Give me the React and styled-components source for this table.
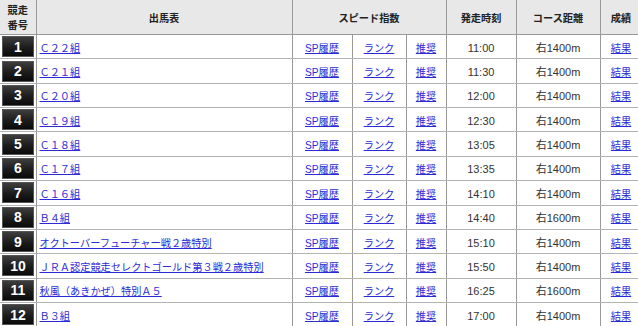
import styled, { createGlobalStyle } from "styled-components";

const races = [
  { no: 1, name: "Ｃ２２組", time: "11:00", dist: "右1400m" },
  { no: 2, name: "Ｃ２１組", time: "11:30", dist: "右1400m" },
  { no: 3, name: "Ｃ２０組", time: "12:00", dist: "右1400m" },
  { no: 4, name: "Ｃ１９組", time: "12:30", dist: "右1400m" },
  { no: 5, name: "Ｃ１８組", time: "13:05", dist: "右1400m" },
  { no: 6, name: "Ｃ１７組", time: "13:35", dist: "右1400m" },
  { no: 7, name: "Ｃ１６組", time: "14:10", dist: "右1400m" },
  { no: 8, name: "Ｂ４組", time: "14:40", dist: "右1600m" },
  { no: 9, name: "オクトーバーフューチャー戦２歳特別", time: "15:10", dist: "右1400m" },
  { no: 10, name: "ＪＲＡ認定競走セレクトゴールド第３戦２歳特別", time: "15:50", dist: "右1400m" },
  { no: 11, name: "秋風（あきかぜ）特別Ａ５", time: "16:25", dist: "右1600m" },
  { no: 12, name: "Ｂ３組", time: "17:00", dist: "右1400m" },
];

const GlobalStyle = createGlobalStyle`
  html, body {
    margin: 0;
    padding: 0;
    background: #fff;
    overflow: hidden;
  }
  body {
    font-family: "Liberation Sans", "Noto Sans CJK JP", sans-serif;
  }
`;

export default function App() {
  return (
    <>
      <GlobalStyle />
      <Table>
        <colgroup>
          <col style={{ width: 36 }} />
          <col style={{ width: 256 }} />
          <col style={{ width: 60 }} />
          <col style={{ width: 54 }} />
          <col style={{ width: 40 }} />
          <col style={{ width: 70 }} />
          <col style={{ width: 84 }} />
          <col style={{ width: 42 }} />
        </colgroup>
        <thead>
          <HeadRow>
            <Th>
              競走
              <br />
              番号
            </Th>
            <Th>出馬表</Th>
            <Th colSpan={3}>スピード指数</Th>
            <Th>発走時刻</Th>
            <Th>コース距離</Th>
            <Th>成績</Th>
          </HeadRow>
        </thead>
        <tbody>
          {races.map((r) => (
            <Row key={r.no}>
              <NumCell>
                <Badge>{r.no}</Badge>
              </NumCell>
              <Td align="left">
                <Link href="#">{r.name}</Link>
              </Td>
              <Td>
                <Link href="#">SP履歴</Link>
              </Td>
              <Td>
                <Link href="#">ランク</Link>
              </Td>
              <Td>
                <Link href="#">推奨</Link>
              </Td>
              <Td>
                <Plain>{r.time}</Plain>
              </Td>
              <Td>
                <Plain>{r.dist}</Plain>
              </Td>
              <Td>
                <Link href="#">結果</Link>
              </Td>
            </Row>
          ))}
        </tbody>
      </Table>
    </>
  );
}

const Table = styled.table`
  border-collapse: collapse;
  table-layout: fixed;
  width: 642px;
  border: none;
`;

const HeadRow = styled.tr`
  height: 34.5px;
`;

const Row = styled.tr`
  height: 24.37px;
`;

const Th = styled.th`
  background: #e8e8e8;
  color: #222;
  font-family: "Noto Sans CJK JP", sans-serif;
  font-weight: 700;
  font-size: 10.2px;
  line-height: 15px;
  text-align: center;
  vertical-align: middle;
  padding: 0;
  border: 1px solid #999;
  border-top: none;
  &:first-child {
    border-left: none;
  }
`;

const Td = styled.td`
  text-align: ${(props) => props.align || "center"};
  vertical-align: middle;
  padding: 0 0 0 ${(props) => (props.align === "left" ? "3px" : "0")};
  border: 1px solid #999;
  border-top-color: #b3b3b3;
  border-bottom-color: #b3b3b3;
  white-space: nowrap;
  overflow: hidden;
`;

const NumCell = styled(Td)`
  border-left: none;
  padding: 0;
`;

const Badge = styled.div`
  display: flex;
  align-items: center;
  justify-content: center;
  box-sizing: border-box;
  width: 32px;
  height: 21px;
  margin-left: 2px;
  background: linear-gradient(#3e3e3e, #1c1c1c 55%, #0a0a0a);
  border: 1px solid #555;
  color: #fff;
  font-family: "Liberation Sans", sans-serif;
  font-weight: 700;
  font-size: 14px;
`;

const Link = styled.a`
  color: #2b2bd6;
  text-decoration: underline;
  font-family: "Liberation Sans", "Noto Sans CJK JP", sans-serif;
  font-size: 10.2px;
`;

const Plain = styled.span`
  color: #333;
  font-family: "Liberation Sans", "Noto Sans CJK JP", sans-serif;
  font-size: 11px;
`;
